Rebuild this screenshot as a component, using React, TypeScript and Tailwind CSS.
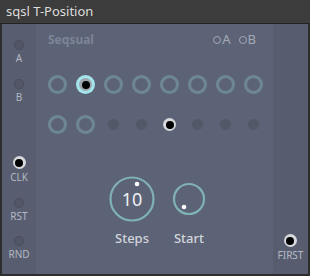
import React from 'react';

const font = { fontFamily: '"Noto Sans", "DejaVu Sans", sans-serif' };

function Dot() {
  return <div className="h-[10px] w-[10px] rounded-full bg-[#525768] shadow-[inset_0_0_0_1px_#4a4f5f]" />;
}

function Jack() {
  return (
    <div className="flex h-[13px] w-[13px] items-center justify-center rounded-full bg-[#d6d8dc]">
      <div className="h-[8px] w-[8px] rounded-full bg-black" />
    </div>
  );
}

function Ring() {
  return <div className="h-[19px] w-[19px] rounded-full border-[3px] border-[#6e8794]" />;
}

function ActiveRing() {
  return (
    <div className="flex h-[19px] w-[19px] items-center justify-center rounded-full bg-[#a4e4ec]">
      <div className="flex h-[13px] w-[13px] items-center justify-center rounded-full bg-[#9fa3aa]">
        <div className="h-[8px] w-[8px] rounded-full bg-black" />
      </div>
    </div>
  );
}

function SmallDot() {
  return <div className="h-[11px] w-[11px] rounded-full bg-[#535869]" />;
}

function Port({ label, jack, className }: { label: string; jack?: boolean; className?: string }) {
  return (
    <div className={`flex flex-col items-center ${className ?? ''}`}>
      {jack ? <Jack /> : <Dot />}
      <div className="mt-[3px] text-[10px] leading-[10px] text-[#b4b9c3]">{label}</div>
    </div>
  );
}

export default function App() {
  const row1 = [0, 1, 0, 0, 0, 0, 0, 0];
  const row2 = ['r', 'r', 'd', 'd', 'j', 'd', 'd', 'd'];
  return (
    <div className="flex h-[276px] w-[310px] flex-col bg-[#2e2e2e]" style={font}>
      <div className="flex h-[23px] items-center bg-[#3c3c3c] pl-[6px] text-[13px] text-[#dcdcdc]">sqsl T-Position</div>
      <div className="h-[1px] bg-[#232323]" />
      <div className="mx-[2px] flex h-[250px]">
        <div className="flex w-[34px] flex-col items-center bg-[#585e70] pt-[16px]">
          <Port label="A" />
          <Port label="B" className="mt-[16px]" />
          <Port label="CLK" jack className="mt-[54px]" />
          <Port label="RST" className="mt-[16px]" />
          <Port label="RND" className="mt-[15px]" />
        </div>
        <div className="flex w-[237px] flex-col bg-[#5d6376]">
          <div className="mt-[9px] flex h-[14px] items-center justify-between pl-[12px] pr-[17px]">
            <span className="text-[12px] font-bold text-[#7c8597]">Seqsual</span>
            <span className="flex items-center gap-[8px] text-[13px] text-[#a3a9b3]">
              <span className="flex items-center gap-[1px]">
                <span className="h-[8px] w-[8px] rounded-full border border-[#a3a9b3]" />A
              </span>
              <span className="flex items-center gap-[1px]">
                <span className="h-[8px] w-[8px] rounded-full border border-[#a3a9b3]" />B
              </span>
            </span>
          </div>
          <div className="mt-[28px] flex gap-[9px] pl-[12px]">
            {row1.map((a, i) => (
              <div key={i} className="flex h-[19px] w-[19px] items-center justify-center">
                {a ? <ActiveRing /> : <Ring />}
              </div>
            ))}
          </div>
          <div className="mt-[21px] flex gap-[9px] pl-[12px]">
            {row2.map((t, i) => (
              <div key={i} className="flex h-[19px] w-[19px] items-center justify-center">
                {t === 'r' ? <Ring /> : t === 'j' ? <Jack /> : <SmallDot />}
              </div>
            ))}
          </div>
          <div className="mt-[42px] flex pl-[71px]">
            <div className="flex w-[50px] flex-col items-center">
              <div className="relative flex h-[46px] w-[46px] items-center justify-center">
                <svg width="46" height="46" className="absolute inset-0">
                  <circle cx="23" cy="23" r="21.5" fill="none" stroke="#7fb1b6" strokeWidth="2.2" />
                  <circle cx="28" cy="8" r="2.3" fill="#ffffff" />
                </svg>
                <span className="relative text-[18px] text-[#eef0f2]">10</span>
              </div>
              <div className="mt-[9px] text-[13px] font-medium leading-[14px] text-[#d2d6dc]">Steps</div>
            </div>
            <div className="ml-[12px] flex w-[40px] flex-col items-center">
              <svg width="46" height="46">
                <circle cx="23" cy="23" r="15" fill="none" stroke="#7fb1b6" strokeWidth="2.2" />
                <circle cx="18" cy="31" r="2.3" fill="#ffffff" />
              </svg>
              <div className="mt-[9px] text-[13px] font-medium leading-[14px] text-[#d2d6dc]">Start</div>
            </div>
          </div>
        </div>
        <div className="flex w-[35px] flex-col items-center bg-[#575d6f] pt-[210px]">
          <Port label="FIRST" jack />
        </div>
      </div>
    </div>
  );
}
